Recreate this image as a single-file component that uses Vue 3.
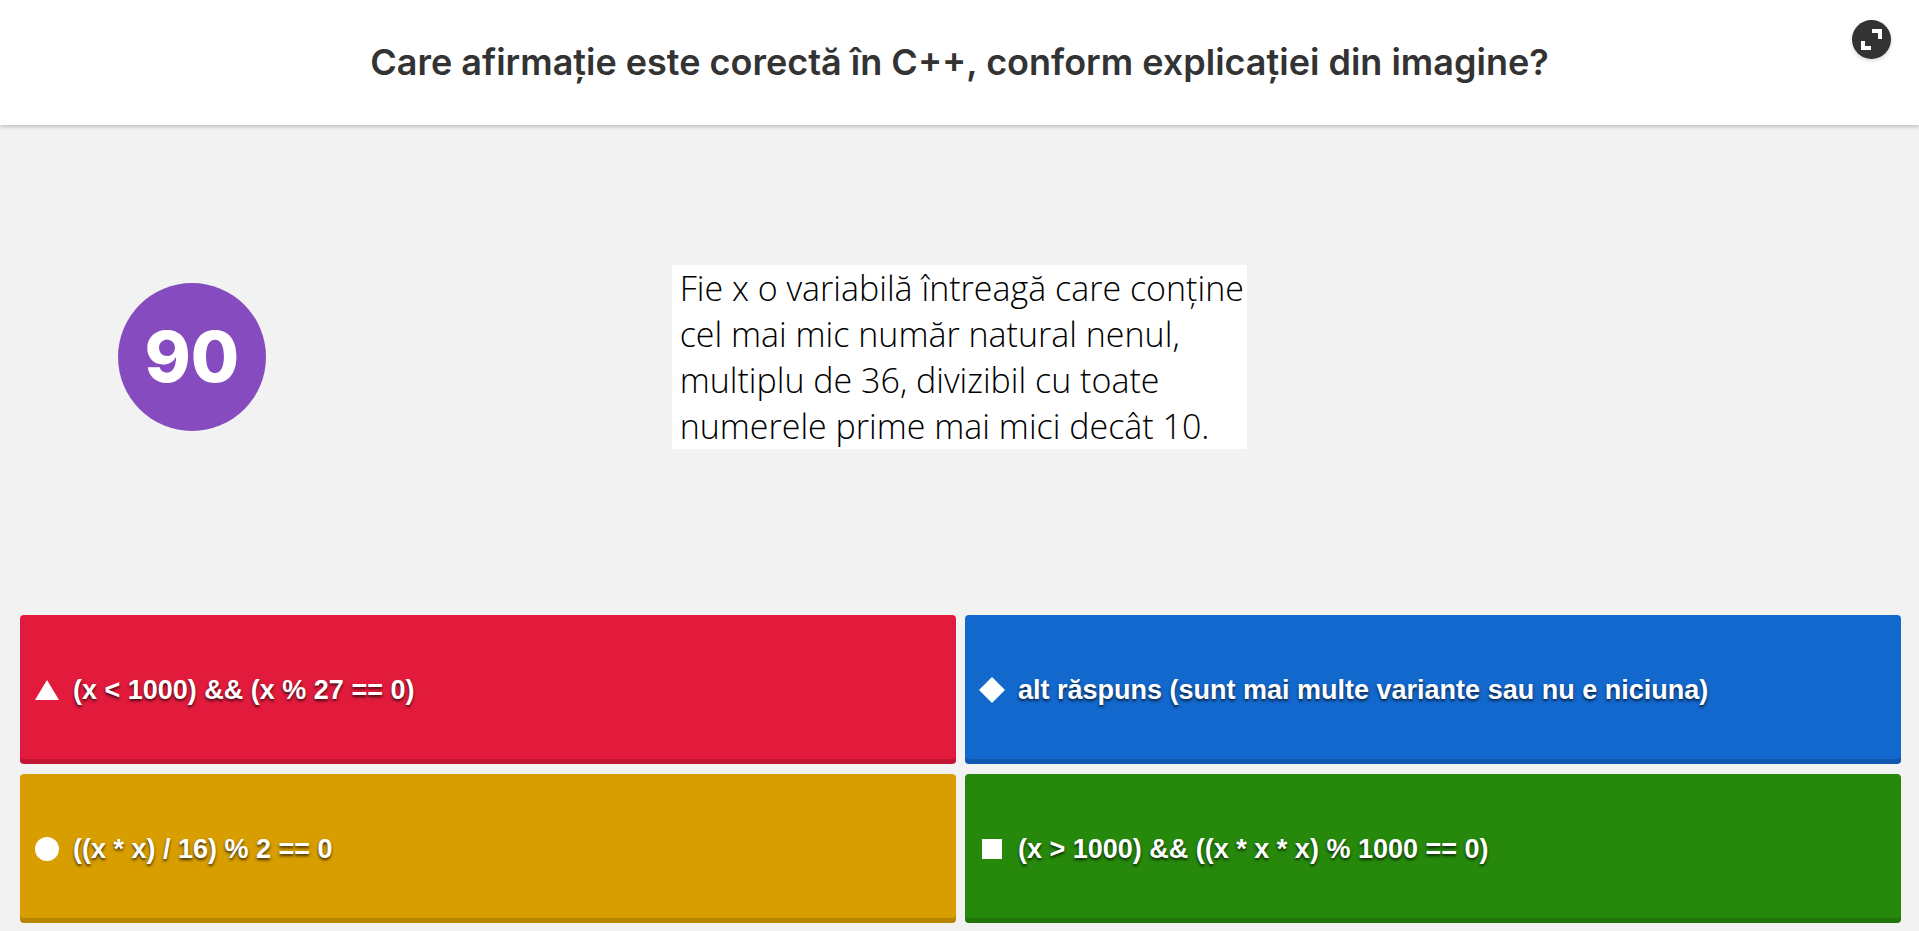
<script setup>
const answers = [
  { text: '(x < 1000) && (x % 27 == 0)', tone: 'red', points: '12,2 24,22 0,22' },
  { text: 'alt răspuns (sunt mai multe variante sau nu e niciuna)', tone: 'blue', points: '12,-1 25,12 12,25 -1,12' },
  { text: '((x * x) / 16) % 2 == 0', tone: 'yellow', circle: true },
  { text: '(x > 1000) && ((x * x * x) % 1000 == 0)', tone: 'green', points: '2,2 22,2 22,22 2,22' }
]
</script>

<template>
  <main class="quiz">
    <header class="top">
      <h1 class="question">Care afirmație este corectă în C++, conform explicației din imagine?</h1>
      <button class="fullscreen" type="button" aria-label="Ecran complet">
        <svg viewBox="0 0 39 39" width="39" height="39" aria-hidden="true">
          <path d="M20 9h10v10h-4v-6h-6zM9 21h4v5h6v4H9z" fill="#fff" />
        </svg>
      </button>
    </header>

    <section class="stage">
      <div class="timer">90</div>
      <p class="statement">
        Fie x o variabilă întreagă care conține<br />cel mai mic număr natural nenul,<br />multiplu de 36, divizibil cu toate<br />numerele prime mai mici decât 10.
      </p>
    </section>

    <section class="answers">
      <button v-for="a in answers" :key="a.tone" type="button" class="answer" :class="a.tone">
        <svg class="shape" viewBox="0 0 24 24" aria-hidden="true">
          <circle v-if="a.circle" cx="12" cy="12" r="12" />
          <polygon v-else :points="a.points" />
        </svg>
        <span>{{ a.text }}</span>
      </button>
    </section>
  </main>
</template>

<style>
body {
  margin: 0;
  background: #f2f2f2;
}
</style>

<style scoped>
.quiz {
  min-height: 100vh;
  display: flex;
  flex-direction: column;
  box-sizing: border-box;
  background: #f2f2f2;
}

.top {
  display: grid;
  grid-template-columns: 1fr auto 1fr;
  min-height: 125px;
  background: #fff;
  box-shadow: 0 2px 4px rgba(0, 0, 0, 0.2);
}

.question {
  grid-column: 2;
  align-self: center;
  margin: 0;
  padding-bottom: 2px;
  color: #333;
  font: 600 36px/48px Inter, sans-serif;
  text-align: center;
}

.fullscreen {
  grid-column: 3;
  justify-self: end;
  width: 39px;
  height: 39px;
  margin: 20px 28px 0 0;
  padding: 0;
  border: 0;
  border-radius: 50%;
  background: #333;
  box-shadow: 0 2px 4px rgba(0, 0, 0, 0.15);
  cursor: pointer;
}

.fullscreen svg {
  display: block;
}

.stage {
  flex: 1;
  display: grid;
  grid-template-columns: 20% 60% 20%;
  align-items: center;
  justify-items: center;
  padding-bottom: 27px;
}

.timer {
  display: grid;
  place-items: center;
  width: 148px;
  height: 148px;
  border-radius: 50%;
  background: #864cbf;
  color: #fff;
  font: 800 70px/80px Inter, sans-serif;
}

.statement {
  width: 50%;
  box-sizing: border-box;
  margin: 0;
  padding: 0 8px;
  background: #fff;
  color: #000;
  font: 300 34px/46px "Open Sans", sans-serif;
  white-space: nowrap;
}

.answers {
  display: grid;
  grid-template-columns: 1fr 1fr;
  gap: 10px 9px;
  padding: 0 18px 8px 20px;
}

.answer {
  display: flex;
  align-items: center;
  gap: 14px;
  min-height: 149px;
  padding: 0 15px;
  border: 0;
  border-radius: 4px;
  box-shadow: inset 0 -5px rgba(0, 0, 0, 0.15);
  color: #fff;
  font: bold 27px/36px "Liberation Sans", Arial, sans-serif;
  text-align: left;
  text-shadow: 0 2px 3px rgba(0, 0, 0, 0.7);
  cursor: pointer;
}

.shape {
  flex: none;
  width: 24px;
  height: 24px;
  fill: #fff;
  overflow: visible;
}

.red {
  background: #e21b3c;
}

.blue {
  background: #1368ce;
}

.yellow {
  background: #d89e00;
}

.green {
  background: #26890c;
}
</style>
